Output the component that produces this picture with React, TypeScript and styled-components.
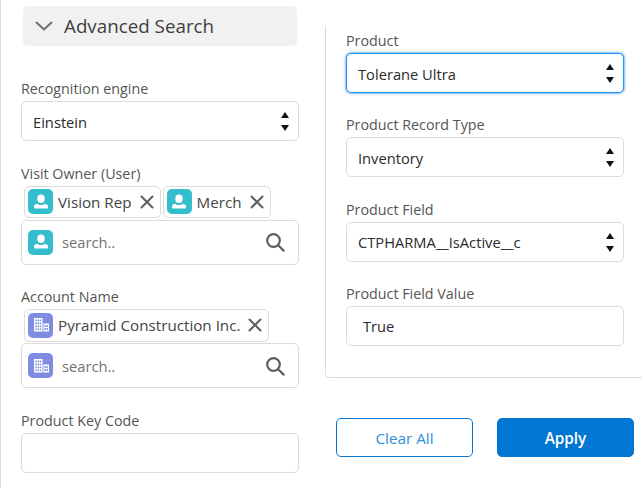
import styled, { createGlobalStyle } from "styled-components";

const GlobalStyle = createGlobalStyle`
  html, body {
    margin: 0;
    padding: 0;
    background: #fff;
  }
  body {
    font-family: "Open Sans", "Noto Sans", sans-serif;
    color: #3e3e3c;
  }
`;

const UserGlyph = () => (
  <svg width="18" height="18" viewBox="0 0 18 18" fill="#fff">
    <ellipse cx="9" cy="5.8" rx="3.7" ry="4.2" />
    <path d="M2 13.6c0-1.6 1.4-2.3 3-2.8 1 .8 2.4 1.2 4 1.2s3-.4 4-1.2c1.600.5 3 1.200 3 2.800v.6c0 .8-.7 1.400-1.500 1.400H3.500C2.700 15.600 2 15 2 14.200z" />
  </svg>
);

const BuildingGlyph = () => (
  <svg width="18" height="18" viewBox="0 0 18 18" fill="#fff">
    <path d="M2 2h8.500v13.500H2zM3.300 3.500v1.700h1.500V3.500zm2.300 0v1.700h1.500V3.500zm2.200 0v1.700h1.400V3.500zM3.300 6.500v1.700h1.500V6.500zm2.300 0v1.700h1.500V6.500zm2.200 0v1.700h1.400V6.500zM3.300 9.500v1.700h1.500V9.500zm2.300 0v1.700h1.500V9.500zm2.200 0v1.700h1.400V9.500zM3.300 12.400v1.700h1.500v-1.700zm2.300 0v1.700h1.500v-1.700zm2.200 0v1.700h1.400v-1.700z" fillRule="evenodd" />
    <path d="M11.300 7.500H17v8h-5.700zm1 1.500v2h1.400V9zm2.200 0v2h1.400V9zm-2.200 3v2h1.400v-2zm2.200 0v2h1.400v-2z" fillRule="evenodd" />
  </svg>
);

const SearchGlyph = () => (
  <svg width="20" height="20" viewBox="0 0 20 20" fill="none" stroke="#5f5f5d" strokeWidth="2.200">
    <circle cx="8.500" cy="8.500" r="6.300" />
    <path d="M13.200 13.200 18.600 18.600" strokeLinecap="round" />
  </svg>
);

const CloseGlyph = () => (
  <svg width="14" height="14" viewBox="0 0 14 14" stroke="#5f5f5d" strokeWidth="2" strokeLinecap="round">
    <path d="M1.500 1.500 12.500 12.500M12.500 1.500 1.500 12.500" />
  </svg>
);

const ChevronGlyph = () => (
  <svg width="18" height="10" viewBox="0 0 18 10" fill="none" stroke="#706e6b" strokeWidth="2" strokeLinecap="round">
    <path d="M1.500 1.500 9 8.500 16.500 1.500" />
  </svg>
);

const Page = styled.div`
  width: 642px;
  height: 488px;
  box-sizing: border-box;
  border-left: 1px solid #dcdcdc;
  display: flex;
  overflow: hidden;
`;

const LeftColumn = styled.div`
  width: 278px;
  margin-left: 20px;
  padding-top: 6px;
  flex-shrink: 0;
`;

const Accordion = styled.div`
  height: 40px;
  margin: 0 2px 33px;
  background: #f1f1f1;
  border-radius: 5px;
  display: flex;
  align-items: center;
  gap: 11px;
  padding-left: 12px;
  font-size: 18.800px;
  color: #3e3e3c;
`;

const Field = styled.div`
  margin-bottom: 22.500px;
`;

const Label = styled.div`
  font-size: 14.300px;
  line-height: 20px;
  height: 22px;
  color: #555553;
`;

const Control = styled.div<{ $focused?: boolean }>`
  height: 40px;
  box-sizing: border-box;
  background: #fff;
  border: 1px solid ${(p) => (p.$focused ? "#1b96ff" : "#dcdcdc")};
  box-shadow: ${(p) => (p.$focused ? "0 0 3px #0176d3" : "none")};
  border-radius: 5px;
  display: flex;
  align-items: center;
  justify-content: space-between;
  padding: 1px 9px 0 11px;
  font-size: 14.700px;
  color: #2b2b2b;
`;

const TextValue = styled.span`
  padding-left: 5px;
`;

const Spinner = styled.span`
  display: flex;
  flex-direction: column;
  gap: 7px;
`;

const Arrow = styled.span<{ $down?: boolean }>`
  width: 0;
  height: 0;
  border-left: 4px solid transparent;
  border-right: 4px solid transparent;
  ${(p) => (p.$down ? "border-top: 6px solid #111;" : "border-bottom: 6px solid #111;")}
`;

const PillRow = styled.div`
  display: flex;
  gap: 2px;
  padding-left: 3px;
  margin-bottom: 1.750px;
`;

const Pill = styled.div`
  height: 32.500px;
  box-sizing: border-box;
  border: 1px solid #dcdcdc;
  border-radius: 5px;
  display: flex;
  align-items: center;
  padding: 0 6px 0 3px;
  gap: 5px;
  font-size: 15.200px;
  color: #444;
`;

const IconTile = styled.span<{ $color: string }>`
  width: 25px;
  height: 25px;
  border-radius: 5px;
  background: ${(p) => p.$color};
  display: flex;
  align-items: center;
  justify-content: center;
  flex-shrink: 0;
`;

const CloseBtn = styled.span`
  display: flex;
  margin-left: 3px;
`;

const SearchBox = styled.div`
  height: 44.750px;
  box-sizing: border-box;
  border: 1px solid #dcdcdc;
  border-radius: 5px;
  display: flex;
  align-items: center;
  padding: 0 13px 0 6px;
`;

const SearchText = styled.span`
  flex: 1;
  margin-left: 9px;
  font-size: 14.700px;
  color: #747474;
`;

const RightColumn = styled.div`
  margin-left: 26px;
  flex: 1;
  padding-top: 26px;
`;

const Panel = styled.div`
  height: 352px;
  box-sizing: border-box;
  border-left: 1px solid #dcdcdc;
  border-bottom: 1px solid #dcdcdc;
  border-bottom-left-radius: 5px;
  padding: 5px 0 0 20px;
  width: 317px;
`;

const PanelField = styled.div`
  width: 278px;
  margin-bottom: 22.330px;
`;

const ActionRow = styled.div`
  display: flex;
  gap: 24px;
  margin: 40px 0 0 11px;
`;

const ActionButton = styled.div<{ $primary?: boolean }>`
  width: 137px;
  height: 39px;
  box-sizing: border-box;
  border-radius: 5px;
  border: 1px solid #0176d3;
  background: ${(p) => (p.$primary ? "#0176d3" : "#fff")};
  color: ${(p) => (p.$primary ? "#fff" : "#2e8fdc")};
  font-size: 15.300px;
  font-weight: ${(p) => (p.$primary ? 600 : 400)};
  display: flex;
  align-items: center;
  justify-content: center;
`;

const SelectControl = ({ value, focused }: { value: string; focused?: boolean }) => (
  <Control $focused={focused}>
    <span>{value}</span>
    <Spinner>
      <Arrow />
      <Arrow $down />
    </Spinner>
  </Control>
);

const App = () => {
  return (
    <Page>
      <GlobalStyle />
      <LeftColumn>
        <Accordion>
          <ChevronGlyph />
          Advanced Search
        </Accordion>

        <Field>
          <Label>Recognition engine</Label>
          <SelectControl value="Einstein" />
        </Field>

        <Field>
          <Label>Visit Owner (User)</Label>
          <PillRow>
            <Pill>
              <IconTile $color="#34becd"><UserGlyph /></IconTile>
              Vision Rep
              <CloseBtn><CloseGlyph /></CloseBtn>
            </Pill>
            <Pill>
              <IconTile $color="#34becd"><UserGlyph /></IconTile>
              Merch
              <CloseBtn><CloseGlyph /></CloseBtn>
            </Pill>
          </PillRow>
          <SearchBox>
            <IconTile $color="#34becd"><UserGlyph /></IconTile>
            <SearchText>search..</SearchText>
            <SearchGlyph />
          </SearchBox>
        </Field>

        <Field>
          <Label>Account Name</Label>
          <PillRow>
            <Pill>
              <IconTile $color="#7f8de1"><BuildingGlyph /></IconTile>
              Pyramid Construction Inc.
              <CloseBtn><CloseGlyph /></CloseBtn>
            </Pill>
          </PillRow>
          <SearchBox>
            <IconTile $color="#7f8de1"><BuildingGlyph /></IconTile>
            <SearchText>search..</SearchText>
            <SearchGlyph />
          </SearchBox>
        </Field>

        <Field>
          <Label>Product Key Code</Label>
          <Control />
        </Field>
      </LeftColumn>

      <RightColumn>
        <Panel>
          <PanelField>
            <Label>Product</Label>
            <SelectControl value="Tolerane Ultra" focused />
          </PanelField>
          <PanelField>
            <Label>Product Record Type</Label>
            <SelectControl value="Inventory" />
          </PanelField>
          <PanelField>
            <Label>Product Field</Label>
            <SelectControl value="CTPHARMA__IsActive__c" />
          </PanelField>
          <PanelField>
            <Label>Product Field Value</Label>
            <Control>
              <TextValue>True</TextValue>
            </Control>
          </PanelField>
        </Panel>
        <ActionRow>
          <ActionButton>Clear All</ActionButton>
          <ActionButton $primary>Apply</ActionButton>
        </ActionRow>
      </RightColumn>
    </Page>
  );
};

export default App;
